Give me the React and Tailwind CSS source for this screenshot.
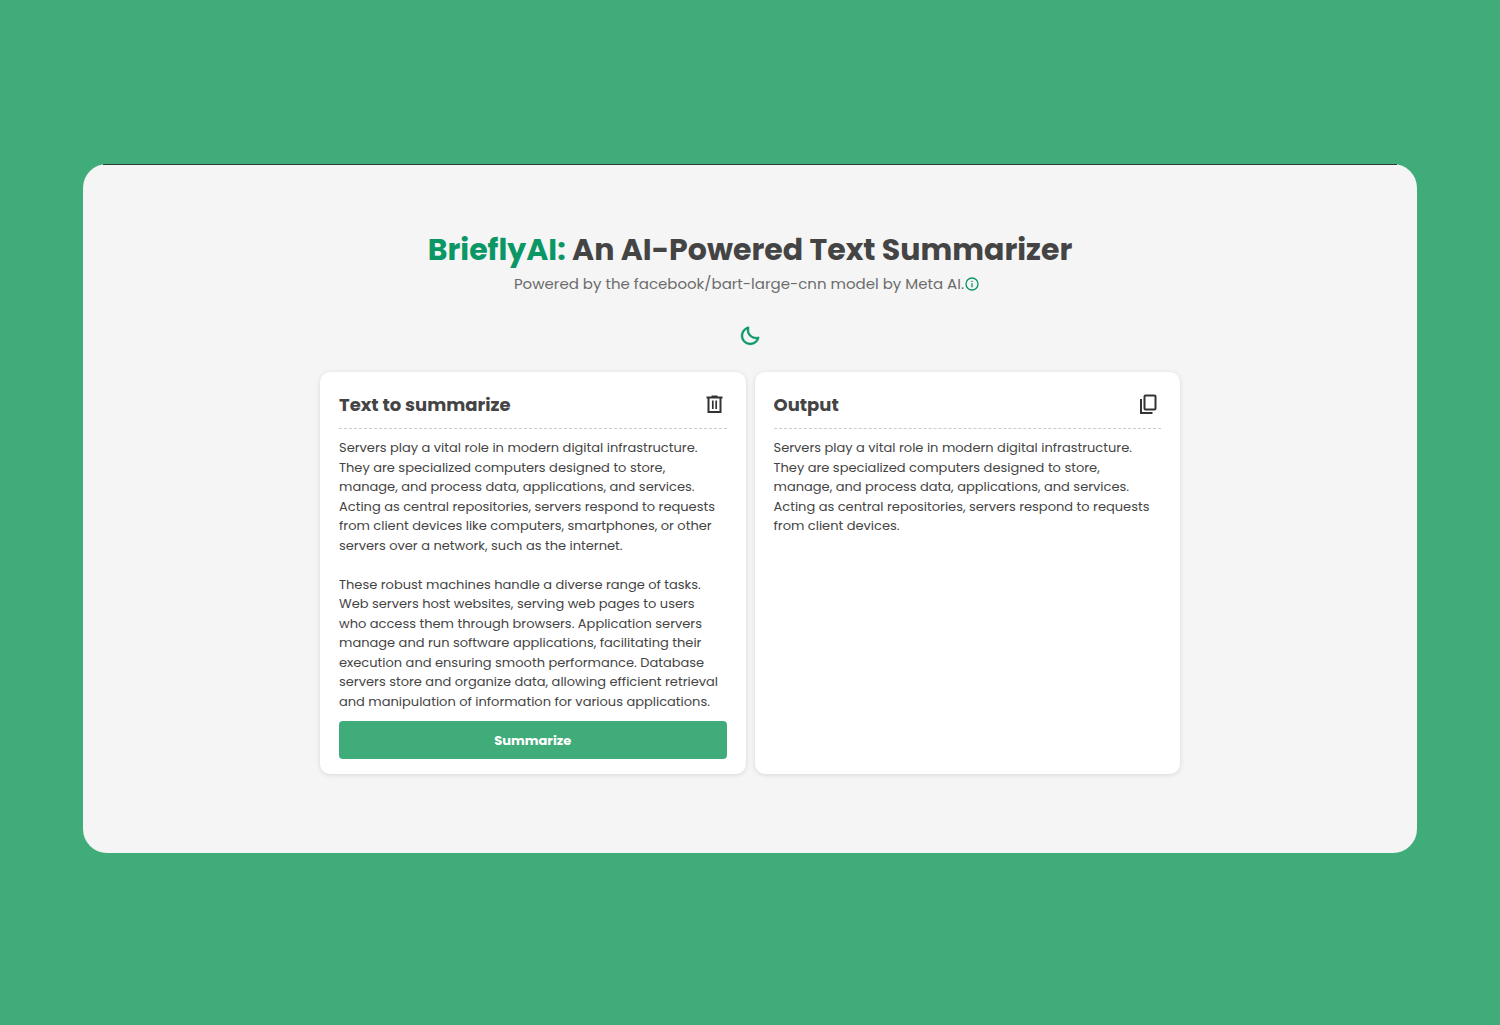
import React from "react";

const SOURCE = `Servers play a vital role in modern digital infrastructure. They are specialized computers designed to store, manage, and process data, applications, and services. Acting as central repositories, servers respond to requests from client devices like computers, smartphones, or other servers over a network, such as the internet.

These robust machines handle a diverse range of tasks. Web servers host websites, serving web pages to users who access them through browsers. Application servers manage and run software applications, facilitating their execution and ensuring smooth performance. Database servers store and organize data, allowing efficient retrieval and manipulation of information for various applications.`;

const SUMMARY =
  "Servers play a vital role in modern digital infrastructure. They are specialized computers designed to store, manage, and process data, applications, and services. Acting as central repositories, servers respond to requests from client devices.";

function InfoIcon() {
  return (
    <svg viewBox="0 0 24 24" className="size-4" fill="currentColor" aria-hidden="true">
      <path d="M12 2a10 10 0 1 0 0 20 10 10 0 0 0 0-20zm0 18a8 8 0 1 1 0-16 8 8 0 0 1 0 16z" />
      <path d="M11 11h2v6h-2zM11 7h2v2h-2z" />
    </svg>
  );
}

function MoonIcon() {
  return (
    <svg viewBox="0 0 24 24" className="size-[22px]" fill="currentColor" stroke="currentColor" strokeWidth="0.5" aria-hidden="true">
      <path d="M20.742 13.045a8.088 8.088 0 0 1-2.077.271c-2.135 0-4.14-.83-5.646-2.336a8.025 8.025 0 0 1-2.064-7.723A1 1 0 0 0 9.73 2.034a10.014 10.014 0 0 0-4.489 2.582c-3.898 3.898-3.898 10.243 0 14.143a9.937 9.937 0 0 0 7.072 2.93 9.93 9.93 0 0 0 7.07-2.929 10.007 10.007 0 0 0 2.583-4.491 1.001 1.001 0 0 0-1.224-1.224zm-2.772 4.301a7.947 7.947 0 0 1-5.656 2.343 7.953 7.953 0 0 1-5.658-2.344c-3.118-3.119-3.118-8.195 0-11.314a7.923 7.923 0 0 1 2.06-1.483 10.027 10.027 0 0 0 2.89 7.848 9.972 9.972 0 0 0 7.848 2.891 8.036 8.036 0 0 1-1.484 2.059z" />
    </svg>
  );
}

function TrashIcon() {
  return (
    <svg viewBox="0 0 24 24" className="size-6" fill="none" stroke="currentColor" strokeWidth="2" aria-hidden="true">
      <path d="M3.5 5.5h16M5.5 5.5V20h12V5.5M8.5 4.5h6" />
      <path d="M9.8 8.5v8.5M13.2 8.5v8.5" strokeWidth="1.7" />
    </svg>
  );
}

function CopyIcon() {
  return (
    <svg viewBox="0 0 24 24" className="size-6" fill="none" stroke="currentColor" strokeWidth="2" aria-hidden="true">
      <rect x="7.5" y="3.5" width="11" height="14" rx="1" />
      <path d="M4 7v14h11.5" />
    </svg>
  );
}

function Panel({ title, titleId, action, children }) {
  return (
    <section className="flex flex-1 flex-col rounded-[10px] bg-white px-[19px] pt-[19px] pb-[15px] shadow-[0_1px_5px_rgba(0,0,0,0.12)]">
      <header className="flex items-center justify-between border-b border-dashed border-[#cccccc] pb-[11px]">
        <h2 id={titleId} className="pt-0.5 text-lg leading-6 font-bold">{title}</h2>
        {action}
      </header>
      {children}
    </section>
  );
}

export default function App() {
  return (
    <div className="flex min-h-screen flex-col justify-center bg-[#3fac7a] px-[83px] pb-2 font-['Poppins','Inter',sans-serif] text-[#444444]">
      <main className="flex flex-col items-center rounded-3xl bg-[#f5f5f5] pb-[79px]">
        <div className="h-px self-stretch px-5">
          <div className="h-px bg-[#2c3a34]" />
        </div>
        <h1 className="mt-[65px] text-center text-3xl leading-10 font-bold">
          <span className="text-[#0a9765]">BrieflyAI:</span> An AI-Powered Text Summarizer
        </h1>
        <p className="mt-0.5 mr-1.5 flex items-center text-[15px] leading-6 text-[#6c6c6c]">
          Powered by the facebook/bart-large-cnn model by Meta AI.
          <button type="button" aria-label="About the model" className="text-[#0a9765]"><InfoIcon /></button>
        </p>
        <button type="button" aria-label="Switch to dark mode" className="mt-[29px] text-[#0a9765]"><MoonIcon /></button>
        <div className="mt-[25px] flex w-full max-w-[860px] gap-[9px]">
          <Panel
            title="Text to summarize"
            titleId="source-title"
            action={<button type="button" aria-label="Clear text" className="text-[#333333]"><TrashIcon /></button>}
          >
            <textarea
              aria-labelledby="source-title"
              rows={14}
              defaultValue={SOURCE}
              className="mt-[9px] h-[275px] resize-none overflow-hidden pr-1 text-[13px] leading-normal outline-none"
            />
            <button type="button" className="mt-2 h-[38px] rounded bg-[#3fac7a] pt-0.5 text-[13px] font-bold text-white">
              Summarize
            </button>
          </Panel>
          <Panel
            title="Output"
            titleId="output-title"
            action={<button type="button" aria-label="Copy output" className="text-[#333333]"><CopyIcon /></button>}
          >
            <p className="mt-[9px] text-[13px] leading-normal">{SUMMARY}</p>
          </Panel>
        </div>
      </main>
    </div>
  );
}
